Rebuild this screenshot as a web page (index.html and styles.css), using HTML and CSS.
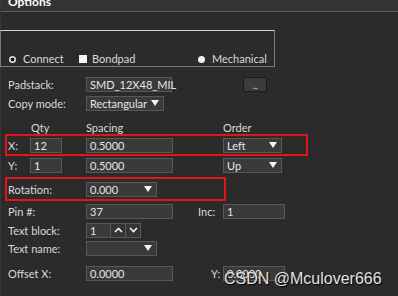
FILE: index.html
```html
<!DOCTYPE html>
<html>
<head>
    <meta charset="UTF-8">
    <title>Options</title>
    <link rel="stylesheet" href="styles.css">
</head>
<body>
    <div class="panel">
        <div class="title">Options</div>

        <div class="modes">
            <span class="opt opt-connect"><span class="radio radio-on"></span>Connect</span>
            <span class="opt opt-bondpad"><span class="check"></span>Bondpad</span>
            <span class="opt"><span class="radio radio-full"></span>Mechanical</span>
        </div>

        <div class="form">
            <div class="row row-padstack">
                <span class="lbl">Padstack:</span>
                <span class="field w-padstack">SMD_12X48_MIL</span>
                <span class="browse">...</span>
            </div>
            <div class="row row-tight">
                <span class="lbl">Copy mode:</span>
                <span class="field combo w-copy">Rectangular<i class="arrow"></i></span>
            </div>

            <div class="row heads">
                <span class="head-pad"></span>
                <span class="head-qty">Qty</span>
                <span class="head-spacing">Spacing</span>
                <span>Order</span>
            </div>

            <div class="hl hl-xy">
                <div class="row">
                    <span class="lbl-xy">X:</span>
                    <span class="field w-qty">12</span>
                    <span class="field w-spacing">0.5000</span>
                    <span class="field combo w-order">Left<i class="arrow"></i></span>
                </div>
            </div>
            <div class="row">
                <span class="lbl-xy">Y:</span>
                <span class="field w-qty">1</span>
                <span class="field w-spacing">0.5000</span>
                <span class="field combo w-order">Up<i class="arrow"></i></span>
            </div>

            <div class="hl hl-rot">
                <div class="row row-rot">
                    <span class="lbl">Rotation:</span>
                    <span class="field combo w-short">0.000<i class="arrow"></i></span>
                </div>
            </div>

            <div class="row row-pin">
                <span class="lbl">Pin #:</span>
                <span class="field w-wide">37</span>
                <span class="lbl-inc">Inc:</span>
                <span class="field w-right">1</span>
            </div>
            <div class="row row-tight">
                <span class="lbl">Text block:</span>
                <span class="field w-block">1</span>
                <span class="spin">
                    <svg width="9" height="6" viewBox="0 0 9 6"><polyline points="1,5 4.5,1.5 8,5" fill="none" stroke="#f2f2f2" stroke-width="1.6"/></svg>
                </span>
                <span class="spin">
                    <svg width="9" height="6" viewBox="0 0 9 6"><polyline points="1,1 4.5,4.5 8,1" fill="none" stroke="#f2f2f2" stroke-width="1.6"/></svg>
                </span>
            </div>
            <div class="row">
                <span class="lbl">Text name:</span>
                <span class="field combo w-short"><i class="arrow"></i></span>
            </div>

            <div class="row row-offset">
                <span class="lbl">Offset X:</span>
                <span class="field w-wide">0.0000</span>
                <span class="lbl-y">Y:</span>
                <span class="field w-right">0.0000</span>
            </div>
        </div>

        <div class="watermark">CSDN @Mculover666</div>
    </div>
</body>
</html>
```

FILE: styles.css
```css
body {
    margin: 0;
    background-color: #2b2b2b;
    font-family: Lato, 'Noto Sans', sans-serif;
    font-size: 11px;
    color: #d9d9d9;
    overflow: hidden;
}

.panel {
    position: relative;
    width: 398px;
    height: 296px;
    border-left: 1px solid #383838;
    box-sizing: border-box;
}

.title {
    height: 11px;
    line-height: 4px;
    padding-left: 7px;
    background-color: #333333;
    border-bottom: 1px solid #5e5e5e;
    font-size: 12px;
    font-weight: bold;
    color: #ffffff;
    overflow: hidden;
}

/* mode selection box */
.modes {
    display: flex;
    align-items: center;
    margin-top: 18px;
    margin-left: -1px;
    width: 275px;
    height: 37px;
    padding-top: 21px;
    box-sizing: border-box;
    border: 1px solid #7a7a7a;
    border-top-color: #d4d4d4;
    line-height: 14px;
}

.opt {
    display: flex;
    align-items: center;
}

.opt-connect {
    width: 70px;
    margin-left: 8px;
}

.opt-bondpad {
    width: 119px;
}

.radio {
    width: 7px;
    height: 7px;
    border-radius: 50%;
    margin-right: 7px;
}

.radio-on {
    background: radial-gradient(circle, #111 0 1.6px, #d8d8d8 2.2px);
}

.radio-full {
    background-color: #f0f0f0;
}

.check {
    width: 8px;
    height: 8px;
    background-color: #f4f4f4;
    margin-right: 5px;
}

/* form rows */
.form {
    padding-left: 7px;
}

.row {
    display: flex;
    align-items: center;
    height: 18px;
}

.row-padstack {
    margin-top: 8px;
}

.row-tight {
    margin-top: 1px;
}

.lbl {
    width: 78px;
    flex: none;
}

.lbl-xy {
    width: 22px;
    flex: none;
}

.lbl-inc {
    width: 25px;
    margin-left: 25px;
}

.lbl-y {
    width: 12px;
    margin-left: 38px;
}

.field {
    display: flex;
    align-items: center;
    height: 15px;
    padding: 0 3px;
    box-sizing: border-box;
    border: 1px solid #585858;
    background-color: #3a3a3a;
    color: #e6e6e6;
    flex: none;
}

.arrow {
    width: 0;
    height: 0;
    margin-left: auto;
    margin-right: 1px;
    border-left: 4px solid transparent;
    border-right: 4px solid transparent;
    border-top: 6px solid #f4f4f4;
}

.w-padstack { width: 86px; }
.w-copy { width: 78px; }
.w-qty { width: 32px; margin-right: 24px; }
.w-spacing { width: 87px; margin-right: 50px; }
.w-order { width: 59px; }
.w-short { width: 71px; }
.w-wide { width: 87px; }
.w-right { width: 62px; }
.w-block { width: 25px; }

.browse {
    display: flex;
    align-items: flex-end;
    justify-content: center;
    width: 24px;
    height: 15px;
    margin-left: 71px;
    box-sizing: border-box;
    border: 1px solid #1c1c1c;
    border-radius: 2px;
    background-color: #3c3c3c;
    font-size: 9px;
    line-height: 11px;
    letter-spacing: -0.5px;
    color: #cfcfcf;
}

.spin {
    display: flex;
    align-items: center;
    justify-content: center;
    width: 15px;
    height: 15px;
    box-sizing: border-box;
    border: 1px solid #585858;
    border-left: none;
    background-color: #353535;
}

/* column heads */
.heads {
    margin-top: 8px;
    height: 14px;
}

.head-pad { width: 23px; }
.head-qty { width: 55px; }
.head-spacing { width: 137px; }

/* red highlight frames */
.hl {
    margin-left: -3px;
    padding-left: 1px;
    border: 2px solid #e3151b;
    box-sizing: border-box;
}

.hl-xy {
    width: 303px;
}

.hl-rot {
    width: 221px;
    margin-top: 3px;
}

.row-rot {
    height: 20px;
}

.row-pin {
    margin-top: 1px;
}

.row-offset {
    margin-top: 7px;
}

.watermark {
    position: absolute;
    left: 223px;
    top: 271px;
    font-family: 'Liberation Sans', Arial, sans-serif;
    font-size: 16px;
    line-height: 16px;
    color: #e2e2e2;
    text-shadow: 1px 1px 1px #000;
    white-space: nowrap;
}
```
